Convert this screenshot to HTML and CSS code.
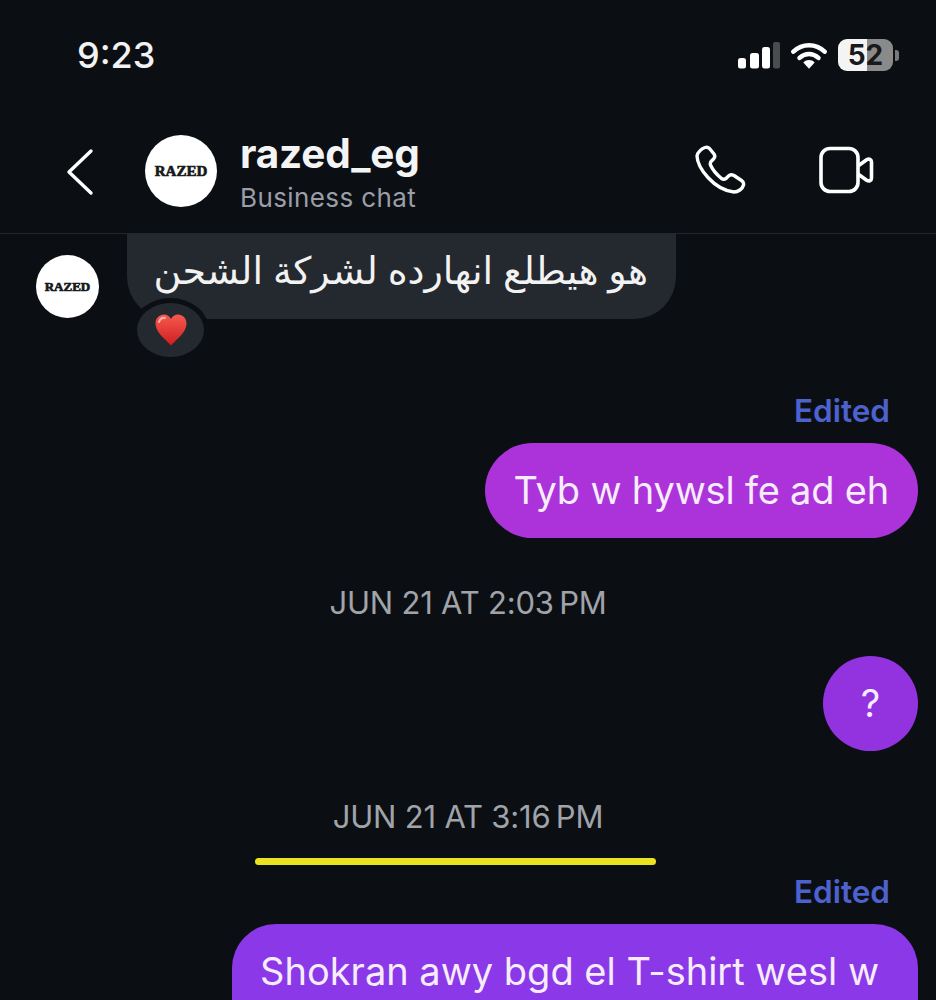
FILE: index.html
```html
<!DOCTYPE html>
<html lang="en">
<head>
<meta charset="utf-8">
<title>razed_eg</title>
<link rel="stylesheet" href="styles.css">
</head>
<body>
<div class="screen">
  <div class="status">
    <span class="clock">9:23</span>
    <div class="status-icons">
      <svg class="signal" width="42" height="27" viewBox="0 0 42 27"><rect x="0" y="16" width="8" height="10.500" rx="2.500" fill="#fff"/><rect x="12" y="11" width="9" height="15.500" rx="2.500" fill="#fff"/><rect x="24" y="5" width="8" height="21.500" rx="2.500" fill="#fff"/><rect x="35" y="0" width="7" height="26.500" rx="2" fill="#4a4c4e"/></svg>
      <svg class="wifi" width="36" height="27" viewBox="0 0 38 28"><path d="M2.500 10 C12 1 26 1 35.500 10" fill="none" stroke="#fff" stroke-width="4.800" stroke-linecap="round"/><path d="M9 16.500 C15 11 23 11 29 16.500" fill="none" stroke="#fff" stroke-width="4.800" stroke-linecap="round"/><path d="M13 21.500 C16 18 22 18 25 21.500 L19 28 Z" fill="#fff"/></svg>
      <div class="battery"><div class="batt-body"><span class="batt-num">52</span></div><span class="batt-tip"></span></div>
    </div>
  </div>
  <header class="topbar">
    <svg class="back" width="30" height="48" viewBox="0 0 30 48"><path d="M26 3 L4 24 L26 45" fill="none" stroke="#fff" stroke-width="3.400" stroke-linecap="round" stroke-linejoin="round"/></svg>
    <div class="avatar avatar-lg"><span class="logo logo-lg">RAZED</span></div>
    <div class="title">
      <div class="name">razed_eg</div>
      <div class="sub">Business chat</div>
    </div>
    <div class="actions">
      <svg width="52" height="52" viewBox="0 0 52 52"><path d="M11 3.500 C8 4.500 3.500 8 3 12 C3.500 24 20 46 40 48 C44 48 48.500 45 49.500 41 C50 39 49 37.500 47.500 36.500 L40 31.500 C38 30.500 36 30.500 34.500 32 L32 34.500 C30.500 35.500 29 35.500 27.500 34.500 C22 30 18.500 25.500 16.500 21 C16 19.500 16.500 18 17.500 17 L19.500 15 C21 13.500 21 11.500 20 10 L15.500 4.500 C14.500 3.500 12.500 3 11 3.500 Z" fill="none" stroke="#fff" stroke-width="3.400" stroke-linejoin="round"/></svg>
      <svg width="56" height="48" viewBox="0 0 56 48"><rect x="2" y="2.500" width="37" height="43" rx="9" fill="none" stroke="#fff" stroke-width="3.600"/><path d="M39 20 L48 13.500 C50 12.500 52.500 13.500 52.500 16 L52.500 32 C52.500 34.500 50 35.500 48 34.500 L39 28" fill="none" stroke="#fff" stroke-width="3.600" stroke-linejoin="round"/></svg>
    </div>
  </header>
  <main class="chat">
    <div class="incoming">
      <div class="avatar avatar-sm"><span class="logo logo-sm">RAZED</span></div>
      <div class="bubble-wrap">
        <div class="bubble-in" dir="rtl" lang="ar">هو هيطلع انهارده لشركة الشحن</div>
        <div class="reaction"><svg width="34" height="34" viewBox="0 0 34 34"><defs><linearGradient id="heart" x1="0" y1="0" x2="0" y2="1"><stop offset="0" stop-color="#f65a50"/><stop offset="1" stop-color="#cf1d1e"/></linearGradient></defs><path d="M17 32.500 C10 25 1.500 19 1.500 10.500 C1.500 5 5.500 1.500 10 1.500 C13 1.500 15.500 3 17 6 C18.500 3 21 1.500 24 1.500 C28.500 1.500 32.500 5 32.500 10.500 C32.500 19 24 25 17 32.500 Z" fill="url(#heart)"/><path d="M5 9 C6 6 8.500 4.500 11 5" fill="none" stroke="#ffb0a8" stroke-width="2" stroke-linecap="round"/></svg></div>
      </div>
    </div>
    <div class="edited edited-first">Edited</div>
    <div class="row-out"><div class="bubble-out magenta">Tyb w hywsl fe ad eh</div></div>
    <div class="stamp stamp-first">JUN 21 AT 2:03&#8201;PM</div>
    <div class="row-out"><div class="bubble-out round violet">?</div></div>
    <div class="stamp stamp-second">JUN 21 AT 3:16&#8201;PM</div>
    <div class="yellow-line"></div>
    <div class="edited edited-second">Edited</div>
    <div class="row-out"><div class="bubble-out purple">Shokran awy bgd el T-shirt wesl w</div></div>
  </main>
</div>
</body>
</html>
```
FILE: styles.css
```css
* { box-sizing: border-box; }
html, body { margin: 0; padding: 0; background: #0b0f14; }
body { width: 936px; height: 1000px; overflow: hidden; font-family: "Inter", "Liberation Sans", sans-serif; color: #fff; }
.screen { width: 936px; height: 1000px; overflow: hidden; display: flex; flex-direction: column; }

.status { height: 104px; display: flex; justify-content: space-between; align-items: flex-start; padding: 34px 37px 0 77px; flex: none; }
.clock { font-size: 36px; line-height: 42px; font-weight: 500; color: #f2f2f2; }
.status-icons { display: flex; align-items: center; gap: 11px; padding-top: 5px; }
.signal, .wifi { display: block; }
.battery { display: flex; align-items: center; gap: 2px; }
.batt-body { width: 55px; height: 32px; border-radius: 9px; background: linear-gradient(90deg, #f4f4f4 0 53%, #8a8a8a 53% 100%); display: flex; align-items: center; justify-content: center; }
.batt-num { font-size: 28px; line-height: 32px; font-weight: 700; color: #17191b; }
.batt-tip { width: 4px; height: 11px; background: #77797b; border-radius: 0 3px 3px 0; }

.topbar { height: 130px; flex: none; display: flex; align-items: flex-start; padding: 27px 0 0 65px; border-bottom: 1px solid #23272c; }
.back { margin-top: 17px; flex: none; }
.avatar { background: #fff; border-radius: 50%; display: flex; align-items: center; justify-content: center; flex: none; }
.avatar-lg { width: 72px; height: 72px; margin-left: 50px; margin-top: 4px; }
.logo { font-family: "Liberation Serif", serif; font-weight: 700; color: #16181a; -webkit-text-stroke: 0.7px #16181a; }
.logo-lg { font-size: 15px; }
.logo-sm { font-size: 13px; }
.title { margin-left: 23px; }
.name { font-size: 40.5px; line-height: 46px; font-weight: 700; color: #f4f4f5; letter-spacing: -0.2px; }
.sub { font-size: 26px; line-height: 30px; color: #9b9ea8; margin-top: 6px; letter-spacing: 0.4px; }
.actions { margin-left: auto; display: flex; align-items: center; gap: 73px; padding: 13px 61px 0 0; }
.actions svg { display: block; }

.chat { flex: 1; display: flex; flex-direction: column; min-height: 0; position: relative; }
.incoming { display: flex; align-items: flex-start; height: 124px; flex: none; }
.avatar-sm { width: 63px; height: 63px; margin-left: 36px; margin-top: 21px; }
.bubble-wrap { margin-left: 28px; position: relative; }
.bubble-in { height: 85px; width: 549px; margin-top: 0; background: #24282f; border-radius: 0 0 42px 42px; padding: 0 28px; font-family: "Noto Sans", "DejaVu Sans", sans-serif; font-size: 38px; line-height: 70px; color: #f2f2f2; white-space: nowrap; }
.reaction { position: absolute; left: 5px; top: 64px; width: 77px; height: 64px; border-radius: 50%; background: #24282f; border: 5px solid #0b0f14; display: flex; align-items: center; justify-content: center; }

.edited { text-align: right; padding-right: 46px; font-size: 31.5px; line-height: 34px; font-weight: 600; color: #4d62cc; flex: none; }
.edited-first { margin-top: 36px; }
.edited-second { margin-top: 10px; }
.row-out { display: flex; justify-content: flex-end; padding-right: 18px; margin-top: 15px; flex: none; }
.bubble-out { height: 95px; border-radius: 47.5px; padding: 0 29px; font-size: 38px; line-height: 95px; color: #f6ecfb; white-space: nowrap; }
.magenta { background: #ab33d9; letter-spacing: -0.2px; }
.violet { background: #9333e0; }
.purple { background: #8a38e8; border-radius: 44px 44px 0 0; padding: 0 39px 0 28px; }
.round { width: 95px; padding: 0; text-align: center; }
.stamp { text-align: center; font-size: 31px; line-height: 36px; color: #a0a4a9; flex: none; letter-spacing: -0.2px; }
.stamp-first { margin-top: 47px; margin-bottom: 20px; }
.stamp-second { margin-top: 48px; }
.yellow-line { width: 401px; height: 7px; border-radius: 3.5px; background: #ebe31f; margin: 23px 0 0 255px; flex: none; }
```
